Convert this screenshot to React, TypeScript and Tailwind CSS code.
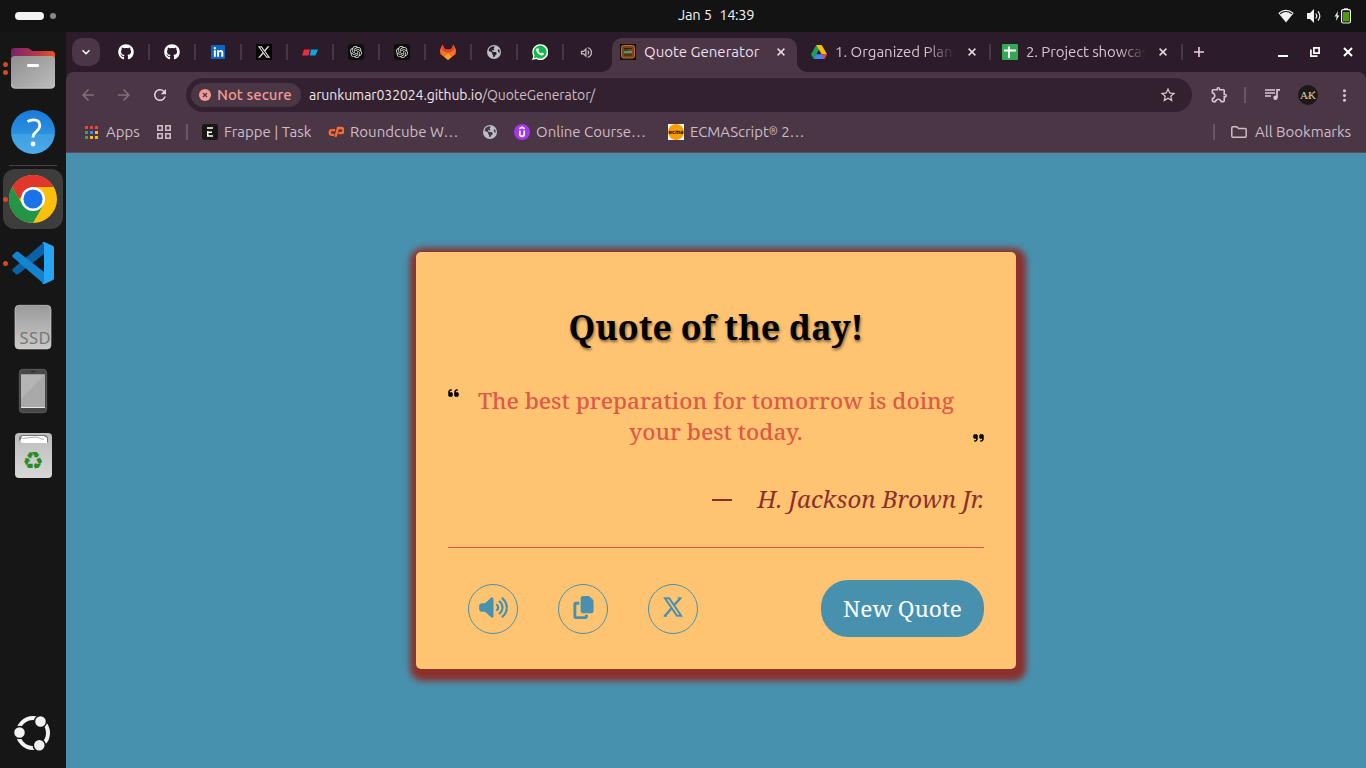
import React from "react";
import {
  FaCopy,
  FaEarthAmericas,
  FaGithub,
  FaLinkedinIn,
  FaQuoteLeft,
  FaQuoteRight,
  FaVolumeHigh,
  FaXTwitter,
} from "react-icons/fa6";
import { SiOpenai } from "react-icons/si";
import {
  MdArrowBack,
  MdArrowForward,
  MdKeyboardArrowDown,
  MdMoreVert,
  MdOutlineExtension,
  MdOutlineVolumeUp,
  MdRefresh,
  MdStarBorder,
} from "react-icons/md";

function TopBar() {
  return (
    <header className="flex h-8 shrink-0 items-center bg-[#131313] text-white">
      <div className="flex w-[678px] items-center gap-1.5 pl-[15px]">
        <span className="h-2 w-[29px] rounded-full bg-[#f2f2f2]" />
        <span className="size-1.5 rounded-full bg-[#8a8a8a]" />
      </div>
      <div className="flex w-[76px] justify-between pb-0.5 text-[14.667px] leading-[30px] whitespace-nowrap text-[#f2f2f2]">
        <span className="tracking-[-0.2px]">Jan 5</span>
        <span className="tracking-[-0.4px]">14:39</span>
      </div>
      <div className="ml-auto flex items-center pr-[15px]">
        <svg className="mr-[12px] h-[16px] w-[16px]" viewBox="0 0 16 16">
          <path d="M0.3 5 Q8-1.6 15.7 5 L8 14.6Z" fill="#f2f2f2" />
          <path d="M2.1 5.7 Q8 1.2 13.9 5.7" fill="none" stroke="#131313" strokeWidth="1.1" />
        </svg>
        <svg className="mr-[12px] h-[16px] w-[16px]" viewBox="0 0 16 16">
          <path d="M1 5h3l4-4v14l-4-4H1z" fill="#f2f2f2" />
          <path d="M9.7 5.5q2 2.5 0 5M12 3.4q3.7 4.6 0 9.2" fill="none" stroke="#f2f2f2" strokeWidth="1.2" />
        </svg>
        <svg className="h-[16px] w-[17px]" viewBox="0 0 17 16">
          <path d="M4 3 0.6 8.6h2.1L1.8 13l3.6-5.6H3.4z" fill="#f2f2f2" />
          <path d="M10 0.300h4v2h-4z" fill="#f2f2f2" />
          <rect x="7.600" y="1.600" width="8.800" height="13.400" rx="1.500" fill="#131313" stroke="#f2f2f2" strokeWidth="1.200" />
          <rect x="9" y="4" width="6" height="9.400" fill="#4e9a06" />
        </svg>
      </div>
    </header>
  );
}

function Dots({ n }: { n: number }) {
  return (
    <span className="flex w-[9px] shrink-0 flex-col items-end gap-[3px] pr-px">
      {Array.from({ length: n }, (_, i) => (
        <span key={i} className="size-[5px] rounded-full bg-[#d9481a]" />
      ))}
    </span>
  );
}

function DockItem({ dots = 0, children }: { dots?: number; children: React.ReactNode }) {
  return (
    <div className="flex h-16 items-center">
      <Dots n={dots} />
      <span className="flex w-12 justify-center">{children}</span>
    </div>
  );
}

function Dock() {
  return (
    <aside className="flex w-[66px] shrink-0 flex-col bg-[#161616] pt-1">
      <DockItem dots={2}>
        <svg className="size-12" viewBox="0 0 48 48">
          <defs>
            <linearGradient id="fb">
              <stop offset="0" stopColor="#77216f" />
              <stop offset="0.6" stopColor="#b93a45" />
              <stop offset="1" stopColor="#e95420" />
            </linearGradient>
            <linearGradient id="ff" x1="0" y1="0" x2="1" y2="1">
              <stop offset="0" stopColor="#8f8f8f" />
              <stop offset="1" stopColor="#bdbdbd" />
            </linearGradient>
          </defs>
          <path d="M2 17V7.500q0-3.500 3.500-3.500h13q1.500 0 3 1.500t3 1.500h18q3.500 0 3.500 3.500v6H2z" fill="url(#fb)" />
          <rect x="2" y="12" width="44" height="32.500" rx="4" fill="url(#ff)" />
          <path d="M2.500 40q0 4.200 4 4.200h35q4 0 4-4.200" fill="none" stroke="#d0d0d0" strokeWidth="0.700" />
          <rect x="18" y="20" width="12" height="3" rx="1.200" fill="#fff" />
        </svg>
      </DockItem>
      <DockItem>
        <svg className="size-12" viewBox="0 0 48 48">
          <defs>
            <linearGradient id="hp" x1="0" y1="0" x2="0" y2="1">
              <stop offset="0" stopColor="#1a7ad6" />
              <stop offset="0.54" stopColor="#2990df" />
              <stop offset="0.55" stopColor="#3ca0e4" />
              <stop offset="1" stopColor="#4caae8" />
            </linearGradient>
          </defs>
          <circle cx="24" cy="24" r="22" fill="url(#hp)" />
          <path d="M18.500 13.500q3-1.700 6-1.700 6.300 0 6.300 5.600 0 3-3.400 6-3.400 2.800-3.400 6" fill="none" stroke="#fff" strokeWidth="2.700" />
          <circle cx="24" cy="36" r="2.400" fill="#fff" />
        </svg>
      </DockItem>
      <div className="mt-px ml-[9px] h-px w-12 bg-[#454545]" />
      <div className="mt-[3px] ml-[3px] flex h-[60px] w-[60px] items-center rounded-xl bg-[#3d3d3d]">
        <span className="size-[5px] rounded-full bg-[#d9481a]" />
        <svg className="ml-px size-12" viewBox="0 0 48 48">
          <circle cx="24" cy="24" r="24" fill="#fcc00c" />
          <path d="M24 12H44.800A24 24 0 0 0 3.200 12L10 24z" fill="#e0362b" />
          <path d="M3.200 12A24 24 0 0 0 24 48L34.400 30 24 34.500 13.600 30z" fill="#249446" />
          <circle cx="24" cy="24" r="12" fill="#fff" />
          <circle cx="24" cy="24" r="9.600" fill="#1a73e8" />
        </svg>
      </div>
      <div className="mt-[2px]">
        <DockItem dots={1}>
          <svg className="size-[44px]" viewBox="0 0 44 44">
            <path d="M33 1v12L7.500 33q-1.400 1-2.600 0l-3-2.800q-1.200-1.200 0-2.400z" fill="#0a62a4" />
            <path d="M33 43V31L7.500 11q-1.400-1-2.600 0l-3 2.800q-1.200 1.200 0 2.400z" fill="#1484d0" />
            <path d="M32 1.200q1-.6 2 0l7.700 3.500q1.300.7 1.300 2.100v30.400q0 1.400-1.300 2.100L34 42.800q-2 .8-3-.8 2 .2 2-1.700V3.700q0-1.900-2-1.700z" fill="#25a5f3" />
          </svg>
        </DockItem>
      </div>
      <DockItem>
        <svg className="size-12" viewBox="0 0 48 48">
          <defs>
            <linearGradient id="sd" x1="0" y1="0" x2="0" y2="1">
              <stop offset="0" stopColor="#9a9a9a" />
              <stop offset="1" stopColor="#cacaca" />
            </linearGradient>
          </defs>
          <rect x="6" y="2.300" width="36" height="43.700" rx="4" fill="url(#sd)" stroke="#d5d5d5" strokeWidth="0.600" />
          <text x="10.500" y="41" fontSize="16.500" textLength="31" fill="#777" className="font-['Noto_Sans',sans-serif]">SSD</text>
        </svg>
      </DockItem>
      <DockItem>
        <svg className="size-12" viewBox="0 0 48 48">
          <rect x="10.300" y="2.300" width="27.400" height="43.400" rx="3.500" fill="#484848" stroke="#686868" strokeWidth="0.700" />
          <rect x="12" y="7.500" width="24" height="33.500" fill="#a9a9a9" />
          <path d="M12 7.500h24L12 32z" fill="#b5b5b5" />
          <path d="M12 40.500h24" stroke="#e5e5e5" />
          <path d="M22 4.500h4" stroke="#222" />
        </svg>
      </DockItem>
      <DockItem>
        <span className="flex h-[45px] w-[37px] flex-col items-center rounded-[4px] bg-linear-to-b from-[#bcbcbc] to-[#d8d8d8]">
          <svg className="mt-[2px] h-[9px] w-[29px]" viewBox="0 0 29 9">
            <path d="M0 4q0-4 4-4h21q4 0 4 4v3.500H1z" fill="#777" />
            <path d="M3 1h22l3 2v5H3l-2-1z" fill="#fff" />
            <path d="M3 3.500 17 2l8 2.500" fill="none" stroke="#999" strokeWidth="0.800" />
          </svg>
          <span className="mt-[5px] font-['DejaVu_Sans',sans-serif] text-[24px] leading-6 text-[#2a8b22]">♻</span>
        </span>
      </DockItem>
      <div className="mt-auto mb-[17px] ml-[14px]">
        <svg className="size-[36px]" viewBox="0 0 36 36">
          <circle cx="19" cy="18" r="15" fill="none" stroke="#f2f2f2" strokeWidth="4" />
          <g fill="#f2f2f2" stroke="#161616" strokeWidth="1.500">
            <circle cx="5.500" cy="17.500" r="6" />
            <circle cx="26.500" cy="6.500" r="6" />
            <circle cx="25.300" cy="30.300" r="6" />
          </g>
        </svg>
      </div>
    </aside>
  );
}

const globe = <FaEarthAmericas className="size-[14px] text-[#b9bfc4]" />;
const openai = (
  <span className="flex size-4 items-center justify-center rounded-[3px] bg-[#0c0f0e]">
    <SiOpenai className="size-3 text-[#e4e4e4]" />
  </span>
);

const pinned: React.ReactNode[] = [
  <FaGithub className="size-4 text-white" />,
  <FaGithub className="size-4 text-white" />,
  <span className="flex size-[14px] items-center justify-center rounded-[1px] bg-[#0a66c2]">
    <FaLinkedinIn className="size-[11px] text-white" />
  </span>,
  <span className="flex size-4 items-center justify-center bg-black">
    <FaXTwitter className="size-[14px] text-[#d8d8d8]" />
  </span>,
  <svg className="h-[7px] w-4" viewBox="0 0 16 7">
    <path d="M2 .5h6l-1.500 6H0z" fill="#ee2b3b" />
    <path d="M9 .5h7l-2.500 6H7.700z" fill="#06a5e3" />
  </svg>,
  openai,
  openai,
  <svg className="size-4" viewBox="0 0 16 16">
    <path d="M0 6 2.500.5 5 5.500h6L13.500.5 16 6l-.4 4L8 16 .4 10z" fill="#fc6d26" />
    <path d="M2.500.5 5 5.500h6L13.500.5l.9 5.500L8 9 1.600 6z" fill="#e24329" />
    <path d="M8 9 4.300 12.700 8 16l3.700-3.300z" fill="#fca326" />
  </svg>,
  globe,
  <svg className="size-4" viewBox="0 0 16 16">
    <path d="M0 16 1.300 12A8 8 0 1 1 4.200 15z" fill="#fff" />
    <path d="M1.700 14.300 2.600 11.500A6.500 6.500 0 1 1 4.700 13.600z" fill="#11b94c" />
    <path d="M5.300 4.200h1l.8 1.900-.7 1q1 1.700 2.700 2.400l.9-1 1.900.9q0 1.800-1.900 2-2-.1-4-2-2-2-2-3.600 0-1 1.300-1.600z" fill="#fff" />
  </svg>,
  <MdOutlineVolumeUp className="size-[15px] text-[#c8b8c4]" />,
];

function TabClose() {
  return (
    <svg className="size-2 shrink-0" viewBox="0 0 8 8">
      <path d="m.6.600 6.800 6.800m0-6.800L.6 7.400" stroke="#e6d6e2" strokeWidth="1.500" />
    </svg>
  );
}

function TabStrip() {
  return (
    <div className="flex h-10 shrink-0 bg-[#2c1b28] pt-1.5 pl-1.5 text-[#d9c3d3]">
      <span className="mr-[3px] flex size-7 shrink-0 items-center justify-center rounded-[10px] bg-[#4a3645]">
        <MdKeyboardArrowDown className="size-4 text-white" />
      </span>
      {pinned.map((icon, i) => (
        <span key={i} className="relative flex h-7 w-[46px] shrink-0 items-center justify-center">
          {icon}
          {i < 10 && <span className="absolute top-1.5 right-[-1px] h-4 w-0.5 bg-[#4a3645]" />}
        </span>
      ))}
      <div className="relative ml-[3px] flex h-[34px] w-[185px] shrink-0 rounded-t-[10px] bg-[#4a3645] pl-2 text-[#efdfea]">
        <svg className="absolute bottom-0 left-[-10px] size-[10px]" viewBox="0 0 10 10">
          <path d="M10 0v10H0A10 10 0 0 0 10 0" fill="#4a3645" />
        </svg>
        <svg className="absolute right-[-10px] bottom-0 size-[10px]" viewBox="0 0 10 10">
          <path d="M0 0v10h10A10 10 0 0 1 0 0" fill="#4a3645" />
        </svg>
        <span className="flex h-7 w-full items-center">
          <svg className="size-4 shrink-0" viewBox="0 0 16 16">
            <rect width="16" height="16" fill="#17100b" />
            <rect x="1.500" y="1.500" width="13" height="12.500" rx="2" fill="#7d451c" stroke="#b56f30" />
            <path d="M4 4.500h8M4.500 6h3M4 11h8" stroke="#3a1d0c" />
            <path d="M4 8h8" stroke="#3fa06c" strokeWidth="2" />
          </svg>
          <span className="mr-auto ml-2 text-[15px] whitespace-nowrap">Quote Generator</span>
          <span className="mr-3 flex"><TabClose /></span>
        </span>
      </div>
      <div className="ml-[14px] flex h-7 w-[180px] shrink-0 items-center">
        <svg className="h-[14px] w-4 shrink-0" viewBox="0 0 16 14">
          <path d="M5.300 0h5.400L8 4.700 2.700 14 0 9.300z" fill="#18a15b" />
          <path d="M5.300 0h5.400L16 9.300h-5.400z" fill="#fbbc04" />
          <path d="M5.300 9.300H16L13.300 14H2.700z" fill="#4285f4" />
          <path d="M10.600 9.300H16L13.300 14z" fill="#ea4335" />
        </svg>
        <span className="ml-2 w-[120px] shrink-0 overflow-hidden mask-r-from-75% text-[15px] tracking-[-0.02px] whitespace-nowrap">1. Organized Plann</span>
        <span className="ml-[13px] flex"><TabClose /></span>
        <span className="ml-auto h-4 w-0.5 bg-[#4a3645]" />
      </div>
      <div className="ml-[11px] flex h-7 w-[181px] shrink-0 items-center">
        <svg className="size-4 shrink-0" viewBox="0 0 16 16">
          <rect width="16" height="16" rx="1" fill="#34a853" />
          <path d="M2 6.500h12M7 2.500v11.500" stroke="#fff" strokeWidth="2" />
        </svg>
        <span className="ml-2 w-[120px] shrink-0 overflow-hidden mask-r-from-78% text-[15px] tracking-[-0.1px] whitespace-nowrap">2. Project showcas</span>
        <span className="ml-[13px] flex"><TabClose /></span>
        <span className="ml-auto h-4 w-0.5 bg-[#4a3645]" />
      </div>
      <svg className="mt-[9px] ml-[11px] size-[10px] shrink-0" viewBox="0 0 10 10">
        <path d="M5 0v10M0 5h10" stroke="#e6d0e0" strokeWidth="1.600" />
      </svg>
      <div className="ml-auto flex h-7 items-center pr-[13px] text-white">
        <span className="mt-[8px] mr-[22px] h-0.5 w-[10px] bg-white" />
        <svg className="mr-[23px] size-[10px]" viewBox="0 0 10 10">
          <path d="M3.900.900h5.200v5.200H3.900zM.9 2.500V9.100h6.600" fill="none" stroke="#fff" strokeWidth="1.700" />
        </svg>
        <svg className="size-[10px]" viewBox="0 0 10 10">
          <path d="m1 1 8 8m0-8L1 9" stroke="#fff" strokeWidth="2" />
        </svg>
      </div>
    </div>
  );
}

function Toolbar() {
  return (
    <div className="flex h-[46px] shrink-0 items-center pl-[13px]">
      <MdArrowBack className="size-[18px] shrink-0 text-[#82707d]" />
      <MdArrowForward className="ml-[18px] size-[18px] shrink-0 text-[#82707d]" />
      <MdRefresh className="ml-[18px] size-[18px] shrink-0 text-[#e6d0e0]" />
      <div className="ml-[17px] flex h-[34px] w-[1006px] shrink-0 items-center rounded-full bg-[#34212f] pr-[15px] pl-[5px]">
        <span className="flex h-6 w-[110px] items-center rounded-full bg-[#4a3645] pl-2 text-[#f29a93]">
          <svg className="size-3 shrink-0" viewBox="0 0 12 12">
            <circle cx="6" cy="6" r="6" fill="#f29a93" />
            <path d="m4 4 4 4m0-4L4 8" stroke="#4a3645" strokeWidth="1.300" />
          </svg>
          <span className="ml-1.5 text-[15px] font-medium whitespace-nowrap">Not secure</span>
        </span>
        <span className="ml-2 text-[14px] tracking-[-0.07px] whitespace-nowrap text-[#f0e6ed]">
          arunkumar032024.github.io<span className="text-[#cdbcc8]">/QuoteGenerator/</span>
        </span>
        <MdStarBorder className="ml-auto size-[18px] text-[#d9cdd6]" />
      </div>
      <MdOutlineExtension className="mb-px ml-[18px] size-[19px] text-[#d9c3d3]" />
      <span className="ml-[15px] h-4 w-0.5 bg-[#6a5565]" />
      <svg className="ml-[18px] h-[14px] w-[17px]" viewBox="0 0 17 14">
        <path d="M1 2h10M1 5h10M1 8h6" stroke="#d9c3d3" strokeWidth="1.500" />
        <path d="M16 1.800h-3v8" fill="none" stroke="#d9c3d3" strokeWidth="1.700" />
        <circle cx="11.500" cy="9.800" r="2.200" fill="#d9c3d3" />
      </svg>
      <svg className="ml-[17px] size-5" viewBox="0 0 20 20">
        <circle cx="10" cy="10" r="10" fill="#1b1a18" />
        <text x="2" y="13.500" fontSize="10" textLength="16" lengthAdjust="spacingAndGlyphs" fill="#e0cfa6" className="font-['Liberation_Serif',serif]">AK</text>
        <path d="m8 14 9-8" stroke="#cdb98c" strokeWidth="0.700" />
      </svg>
      <MdMoreVert className="ml-[17px] size-[19px] text-[#d9c3d3]" />
    </div>
  );
}

const appColors = ["#f44336", "#f44336", "#f44336", "#34a853", "#4285f4", "#fbbc05", "#34a853", "#fbbc05", "#fbbc05"];

function Bookmarks() {
  return (
    <div className="flex h-[34px] shrink-0 items-start pr-[15px] pl-[19px] text-[15px] whitespace-nowrap text-[#cdbcc8]">
      <div className="flex h-[28px] w-full items-center">
        <span className="grid grid-cols-3 gap-x-[2px] gap-y-[2px]">
          {appColors.map((c, i) => (
            <span key={i} className="h-[3px] w-[3px]" style={{ background: c }} />
          ))}
        </span>
        <span className="ml-2 w-[34px]">Apps</span>
        <svg className="ml-[17px] size-[14px] shrink-0" viewBox="0 0 14 14">
          <path d="M.8.800h4.400v4.400H.8zM8.800.800h4.400v4.400H8.800zM.8 8.800h4.400v4.400H.8zM8.800 8.800h4.400v4.400H8.800z" fill="none" stroke="#cdbcc8" strokeWidth="1.600" />
        </svg>
        <span className="ml-[15px] h-4 w-0.5 bg-[#6a5565]" />
        <svg className="ml-[14px] size-4 shrink-0" viewBox="0 0 16 16">
          <rect width="16" height="16" rx="2" fill="#171717" />
          <path d="M5 4h6M5 8.200h5M5.800 7v5.200M5 12h6" stroke="#fff" strokeWidth="1.500" />
        </svg>
        <span className="ml-1.5 w-[88px]">Frappe | Task</span>
        <svg className="ml-4 size-4 shrink-0" viewBox="0 0 16 16">
          <path d="M7 6.200H4a2.300 2.300 0 0 0 0 4.600h2.200M7.500 13 10 4h3a2.200 2.200 0 0 1 0 5.200h-2.600" fill="none" stroke="#ff6c2c" strokeWidth="2.300" />
        </svg>
        <span className="ml-1.5 w-[110px]">Roundcube W…</span>
        <span className="ml-[23px]">{globe}</span>
        <svg className="ml-[17px] size-4 shrink-0" viewBox="0 0 16 16">
          <circle cx="8" cy="8" r="8" fill="#a435f0" />
          <path d="M5.800 6.500v3.800q0 2 2.200 2t2.200-2V6.500M5.300 4.700 8 3.200l2.700 1.500" fill="none" stroke="#fff" strokeWidth="1.700" />
        </svg>
        <span className="ml-1.5 w-[110px]">Online Course…</span>
        <svg className="ml-[22px] size-4 shrink-0" viewBox="0 0 16 16">
          <rect width="16" height="16" fill="#fff" />
          <circle cx="8" cy="8" r="8" fill="#ff9c00" />
          <text x="0.500" y="10" fontSize="6" fontWeight="700" textLength="15" lengthAdjust="spacingAndGlyphs" fill="#231504" className="font-['DejaVu_Sans',sans-serif]">ecma</text>
        </svg>
        <span className="ml-1.5 tracking-[-0.05px]">
          ECMAScript<span className="inline-block w-[9px] -translate-y-[2px] text-[11px] tracking-normal">®</span> 2…
        </span>
        <span className="ml-auto h-4 w-0.5 bg-[#6a5565]" />
        <svg className="ml-4 h-3 w-4" viewBox="0 0 16 12">
          <path d="M.8 10V1.800q0-1 1-1h4l1.800 1.700h6.600q1 0 1 1V10q0 1.200-1 1.200H1.800q-1 0-1-1.200z" fill="none" stroke="#cdbcc8" strokeWidth="1.500" />
        </svg>
        <span className="ml-2 w-24">All Bookmarks</span>
      </div>
    </div>
  );
}

function RoundButton({ children }: { children: React.ReactNode }) {
  return (
    <button className="flex size-[50px] items-center justify-center rounded-full border border-[#4891ae] pb-0.5 text-[#4891ae]">
      {children}
    </button>
  );
}

function QuoteCard() {
  return (
    <main className="mt-[99px] ml-[350px] flex h-[417px] w-[600px] flex-col rounded-[5px] bg-[#ffc472] px-8 font-['Noto_Serif',serif] shadow-[2px_4px_6px_8px_#8b302c]">
      <h1 className="mt-[51px] text-center text-[34px] leading-[48px] font-bold text-black [text-shadow:1px_2px_3px_rgba(0,0,0,0.5)]">
        Quote of the day!
      </h1>
      <div className="-mx-px mt-[34px] flex h-[62px] justify-between">
        <FaQuoteLeft className="mt-[2px] h-3 w-[13px] shrink-0" />
        <p className="w-[490px] text-center text-[22.6px] leading-[31px] font-medium text-[#dd5a48]">
          The best preparation for tomorrow is doing
          <br />
          your best today.
        </p>
        <FaQuoteRight className="mt-auto mb-[3px] h-3 w-[13px] shrink-0" />
      </div>
      <div className="mt-[36px] flex h-8 items-center justify-end text-[#8b302c]">
        <span className="mt-px mr-[25px] h-0.5 w-5 bg-[#8b302c]" />
        <span className="text-[24px] leading-8 whitespace-nowrap italic">H. Jackson Brown Jr.</span>
      </div>
      <div className="mt-[32px] flex items-center justify-between border-t border-[#dd5a48] pt-8">
        <div className="flex gap-10 pl-5">
          <RoundButton><FaVolumeHigh className="h-[23px] w-[29px]" /></RoundButton>
          <RoundButton><FaCopy className="size-[23px]" /></RoundButton>
          <RoundButton>
            <svg className="mb-px size-5" viewBox="0 0 20 20" fill="none" stroke="currentColor">
              <path d="M2 1.200H6.200L18.200 18.800H14z" strokeWidth="2" />
              <path d="M17.500 1 11.300 8.100M8.600 11.300 1.600 19.300" strokeWidth="2.300" />
              <path d="M14.800.9h3.800M.6 19.100h3.200" strokeWidth="1.200" />
            </svg>
          </RoundButton>
        </div>
        <button className="h-[57px] w-[163px] rounded-[27px] bg-[#4891ae] text-[22.600px] whitespace-nowrap text-white">
          New Quote
        </button>
      </div>
    </main>
  );
}

export default function App() {
  return (
    <div className="flex h-[768px] w-[1366px] flex-col overflow-hidden bg-[#131313] font-['Ubuntu','Noto_Sans',sans-serif]">
      <TopBar />
      <div className="flex min-h-0 flex-1">
        <Dock />
        <div className="flex w-[1300px] flex-col bg-[#4891ae]">
          <TabStrip />
          <div className="bg-[#2c1b28]">
            <div className="rounded-t-[8px] border-b border-[#5d4a58] bg-[#4a3645]">
              <Toolbar />
              <Bookmarks />
            </div>
          </div>
          <QuoteCard />
        </div>
      </div>
    </div>
  );
}
